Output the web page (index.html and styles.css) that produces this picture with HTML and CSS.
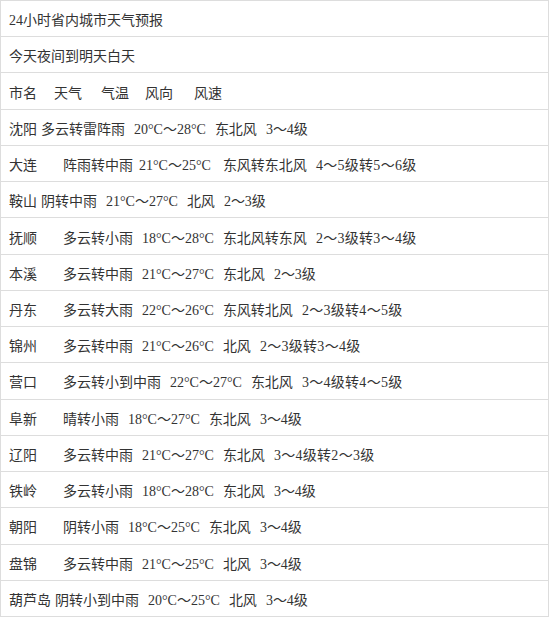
FILE: index.html
```html
<!DOCTYPE html>
<html lang="zh-CN">
<head>
<meta charset="utf-8">
<title>24小时省内城市天气预报</title>
<link rel="stylesheet" href="styles.css">
</head>
<body>
<div class="table">
  <div class="row"><span>24小时省内城市天气预报</span></div>
  <div class="row"><span>今天夜间到明天白天</span></div>
  <div class="row head">
    <span class="h1">市名</span><span class="h2">天气</span><span class="h3">气温</span><span class="h4">风向</span><span class="h5">风速</span>
  </div>
  <div class="row"><span class="city short">沈阳</span><span class="f">多云转雷阵雨</span><span class="f">20°C～28°C</span><span class="f">东北风</span><span class="f">3～4级</span></div>
  <div class="row"><span class="city">大连</span><span>阵雨转中雨</span><span class="tight">21°C～25°C</span><span class="wide">东风转东北风</span><span class="f sp">4～5级转5～6级</span></div>
  <div class="row"><span class="city short">鞍山</span><span class="f">阴转中雨</span><span class="f">21°C～27°C</span><span class="f">北风</span><span class="f">2～3级</span></div>
  <div class="row"><span class="city">抚顺</span><span>多云转小雨</span><span class="f">18°C～28°C</span><span class="f">东北风转东风</span><span class="f sp">2～3级转3～4级</span></div>
  <div class="row"><span class="city">本溪</span><span>多云转中雨</span><span class="f">21°C～27°C</span><span class="f">东北风</span><span class="f">2～3级</span></div>
  <div class="row"><span class="city">丹东</span><span>多云转大雨</span><span class="f">22°C～26°C</span><span class="f">东风转北风</span><span class="f sp">2～3级转4～5级</span></div>
  <div class="row"><span class="city">锦州</span><span>多云转中雨</span><span class="f">21°C～26°C</span><span class="f">北风</span><span class="f sp">2～3级转3～4级</span></div>
  <div class="row"><span class="city">营口</span><span>多云转小到中雨</span><span class="f">22°C～27°C</span><span class="f">东北风</span><span class="f sp">3～4级转4～5级</span></div>
  <div class="row"><span class="city">阜新</span><span>晴转小雨</span><span class="f">18°C～27°C</span><span class="f">东北风</span><span class="f">3～4级</span></div>
  <div class="row"><span class="city">辽阳</span><span>多云转中雨</span><span class="f">21°C～27°C</span><span class="f">东北风</span><span class="f sp">3～4级转2～3级</span></div>
  <div class="row"><span class="city">铁岭</span><span>多云转小雨</span><span class="f">18°C～28°C</span><span class="f">东北风</span><span class="f">3～4级</span></div>
  <div class="row"><span class="city">朝阳</span><span>阴转小雨</span><span class="f">18°C～25°C</span><span class="f">东北风</span><span class="f">3～4级</span></div>
  <div class="row"><span class="city">盘锦</span><span>多云转中雨</span><span class="f">21°C～25°C</span><span class="f">北风</span><span class="f">3～4级</span></div>
  <div class="row"><span class="city short">葫芦岛</span><span class="f">阴转小到中雨</span><span class="f">20°C～25°C</span><span class="f">北风</span><span class="f">3～4级</span></div>
</div>
</body>
</html>
```
FILE: styles.css
```css
html, body {
  margin: 0;
  padding: 0;
  background: #ffffff;
}
body {
  font-family: "Liberation Serif", "Noto Sans CJK SC", serif;
  font-size: 14px;
  color: #333333;
}
.table {
  width: 549px;
  box-sizing: border-box;
  border: 1px solid #dddddd;
  border-bottom: none;
}
.row {
  display: flex;
  align-items: center;
  height: 36.24px;
  box-sizing: border-box;
  border-bottom: 1px solid #dddddd;
  padding: 1px 0 0 8px;
  white-space: nowrap;
}
.city {
  width: 54px;
  flex: none;
}
.city.short {
  width: auto;
  margin-right: -5px;
}
.f {
  margin-left: 9px;
}
.tight {
  margin-left: 6px;
}
.wide {
  margin-left: 12px;
}
.sp {
  letter-spacing: 0.3px;
}
.head .h2 { margin-left: 17px; }
.head .h3 { margin-left: 19px; }
.head .h4 { margin-left: 16px; }
.head .h5 { margin-left: 21px; }
```
